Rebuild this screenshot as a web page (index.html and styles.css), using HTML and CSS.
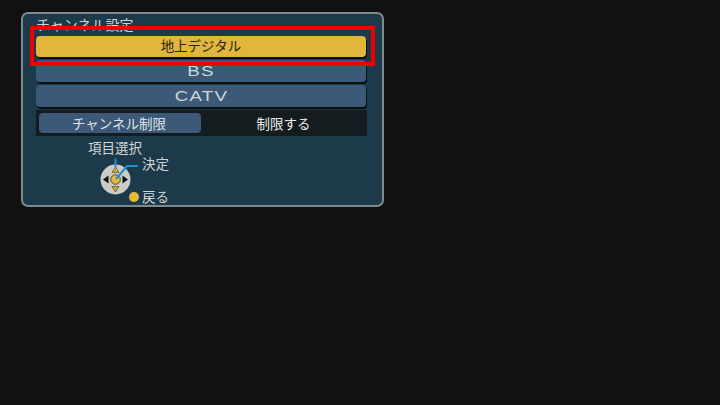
FILE: index.html
```html
<!DOCTYPE html>
<html lang="ja">
    <head>
        <meta charset="UTF-8" />
        <title>チャンネル設定</title>
        <link rel="stylesheet" href="styles.css">
    </head>
    <body>
        <div class="panel">
            <div class="title">チャンネル設定</div>
            <div class="btn active">地上デジタル</div>
            <div class="btn latin"><span class="wide">BS</span></div>
            <div class="btn latin"><span class="wide">CATV</span></div>
            <div class="row">
                <div class="rowLabel">チャンネル制限</div>
                <div class="rowValue">制限する</div>
            </div>
            <div class="help">
                <span class="helpText selectText">項目選択</span>
                <span class="helpText okText">決定</span>
                <span class="helpText backText">戻る</span>
                <svg class="pad" width="60" height="50" viewBox="0 0 60 50">
                    <circle cx="30.5" cy="29.5" r="15" fill="#cbcbc8" />
                    <path d="M30.5 17l3.5 5.5h-7z" fill="#d0a838" stroke="#5d4d1c" stroke-width="0.7" />
                    <path d="M30.5 42l3.5-5.5h-7z" fill="#d0a838" stroke="#5d4d1c" stroke-width="0.7" />
                    <path d="M18 29.5l5.5-4v8z" fill="#111" />
                    <path d="M43 29.5l-5.5-4v8z" fill="#111" />
                    <circle cx="30.5" cy="29.5" r="4.8" fill="#e4b73a" stroke="#4a4a44" stroke-width="1" />
                    <path d="M30.5 8.5v9" stroke="#1a8fd6" stroke-width="2" fill="none" />
                    <path d="M31 29l11-13h11" stroke="#1a8fd6" stroke-width="2" fill="none" />
                </svg>
                <span class="dot"></span>
            </div>
            <div class="marker"></div>
        </div>
    </body>
</html>
```

FILE: styles.css
```css
body {
    margin: 0;
    width: 720px;
    height: 405px;
    overflow: hidden;
    background: #111111;
    font-family: "Noto Sans CJK JP", "Liberation Sans", sans-serif;
}

.panel {
    position: absolute;
    left: 21px;
    top: 12px;
    width: 359px;
    height: 191px;
    border: 2px solid #7f8a8f;
    border-radius: 7px;
    background: #1c3a4a;
    color: #e6e6e6;
}

.title {
    height: 22px;
    padding-left: 13px;
    font-size: 14px;
    line-height: 21px;
    color: #cfd5d6;
    overflow: hidden;
}

.btn {
    width: 330px;
    height: 21px;
    margin: 0 0 3px 13px;
    border-radius: 4px;
    background: #3c5a78;
    box-shadow: 1px 2px 0 #0a0f12;
    color: #dfe4e8;
    font-size: 13.5px;
    line-height: 19px;
    text-align: center;
}

.active {
    background: #e0b63c;
    color: #2a2412;
}

.latin {
    height: 22px;
    font-family: "Liberation Sans", sans-serif;
    font-size: 15px;
    letter-spacing: 1px;
    line-height: 21px;
    color: #cdd5dc;
}

.wide {
    display: inline-block;
    transform: scaleX(1.25);
}

.row {
    display: flex;
    width: 331px;
    height: 26px;
    margin: 2px 0 0 13px;
    padding: 3px 0 3px 3px;
    box-sizing: border-box;
    background: #141c20;
}

.rowLabel {
    width: 160px;
    padding-right: 2px;
    border-radius: 4px;
    background: #3c5a78;
    font-size: 13.5px;
    line-height: 20px;
    text-align: center;
    color: #dfe3e6;
}

.rowValue {
    flex: 1;
    font-size: 13.5px;
    line-height: 20px;
    text-align: center;
    color: #ececec;
    padding-right: 1px;
}

.help {
    position: relative;
    height: 69px;
}

.helpText {
    position: absolute;
    font-size: 13.5px;
    line-height: 16px;
    color: #cfd5d6;
    white-space: nowrap;
}

.selectText {
    left: 65px;
    top: 3px;
}

.okText {
    left: 119px;
    top: 19px;
}

.backText {
    left: 119px;
    top: 52px;
}

.pad {
    position: absolute;
    left: 62px;
    top: 14px;
}

.dot {
    position: absolute;
    left: 106px;
    top: 56px;
    width: 10px;
    height: 10px;
    border-radius: 50%;
    background: #e8bb35;
}

.marker {
    position: absolute;
    left: 7px;
    top: 12px;
    width: 337px;
    height: 32px;
    border: 4px solid #f00000;
}
```
